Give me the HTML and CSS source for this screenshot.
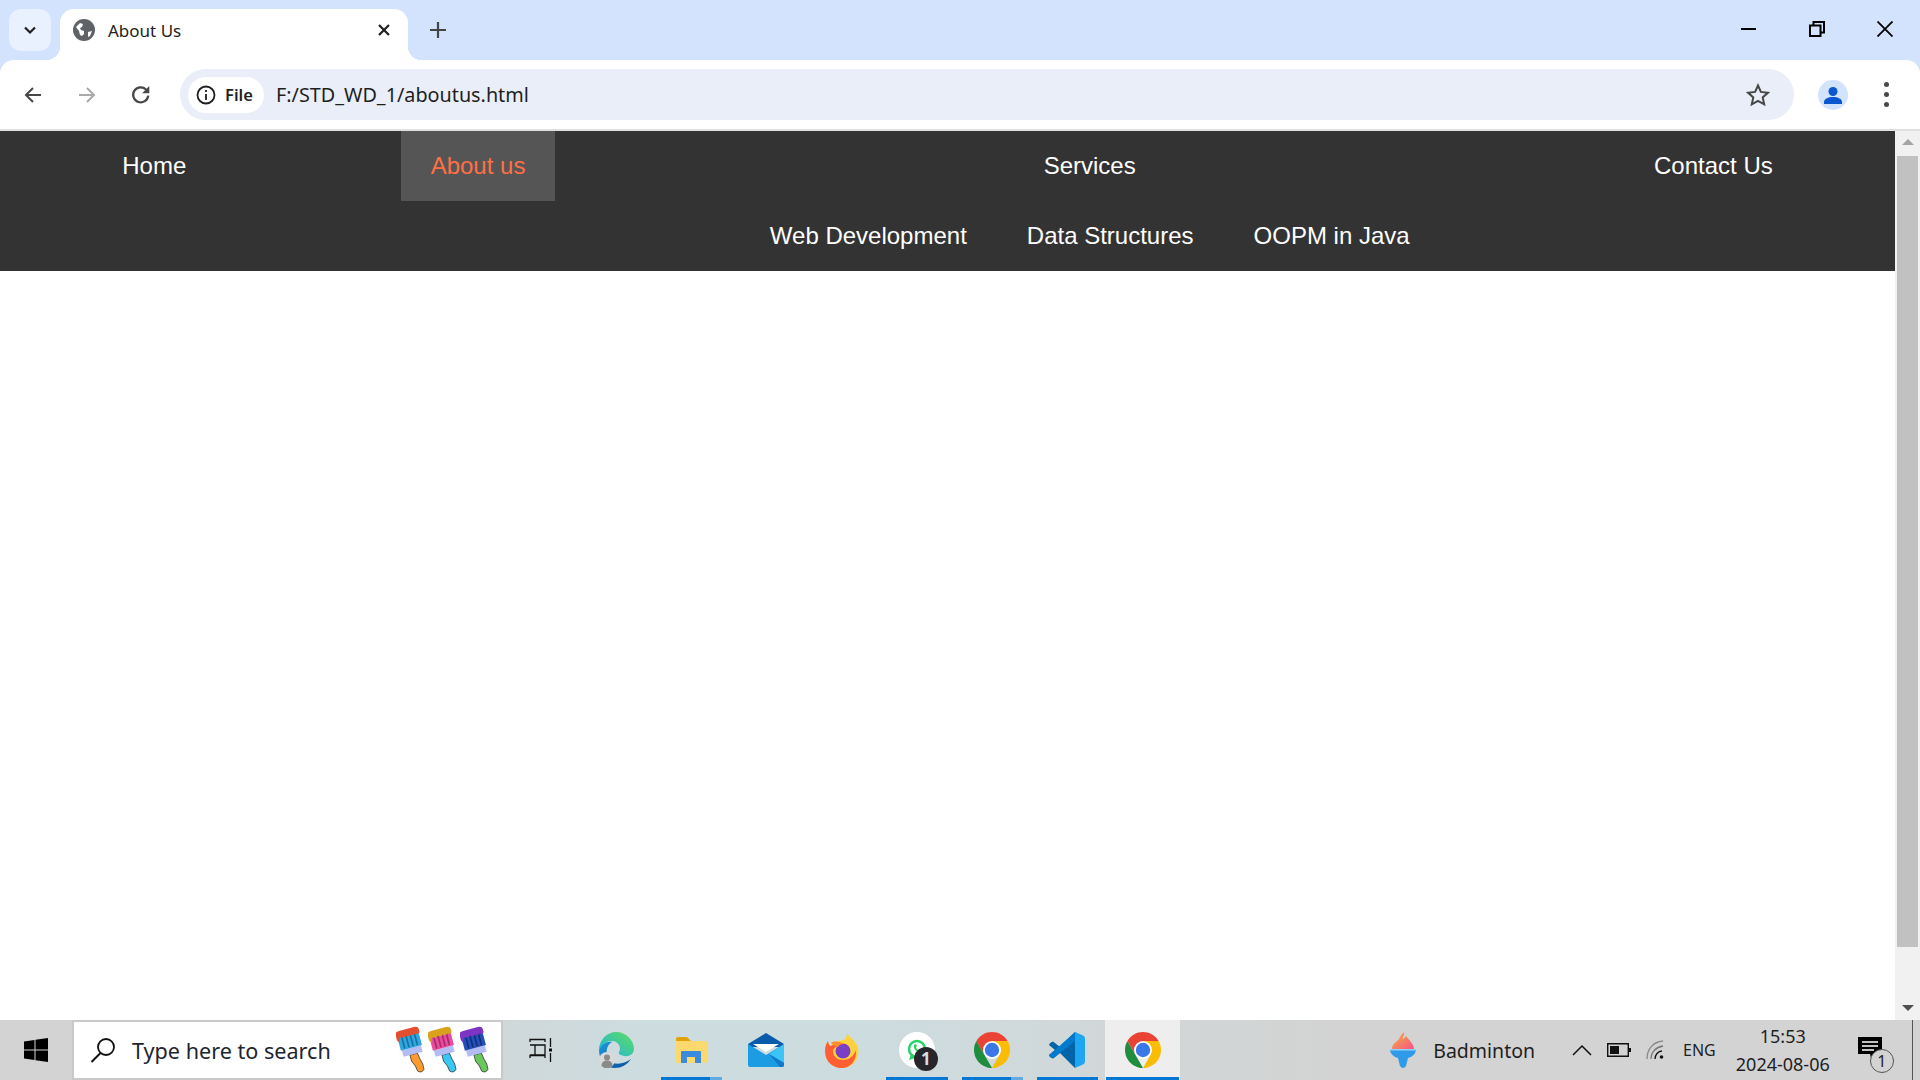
FILE: index.html
```html
<!DOCTYPE html>
<html>
<head>
    <meta charset="UTF-8">
    <title>About Us</title>
    <link rel="stylesheet" href="styles.css">
</head>
<body>
<svg class="defs" width="0" height="0">
    <symbol id="chrome" viewBox="4 4 40 40">
        <path fill="#ea4335" d="M6.68 14A20 20 0 0 1 41.32 14H24L15.34 29Z"/>
        <path fill="#fbbc04" d="M24 14H41.32A20 20 0 0 1 24 44L32.66 29Z"/>
        <path fill="#1e8e3e" d="M6.68 14L15.34 29L24 44A20 20 0 0 1 6.68 14Z"/>
        <circle cx="24" cy="24" r="10" fill="#fff"/>
        <circle cx="24" cy="24" r="8" fill="#3b78e7"/>
    </symbol>
    <symbol id="brush" viewBox="2 2 28 44">
        <g transform="rotate(-15 16 24)">
            <path class="handle" d="M13 28h7l1 6q2 5 1 10q-3 3-6 0q0-5-3-10z" stroke="#222" stroke-width=".6"/>
            <rect x="7" y="22" width="18" height="6" fill="#b4bcf5"/>
            <rect class="hair" x="6" y="6" width="20" height="16"/>
            <path class="line" d="M10 10v11M14 10v11M18 10v11M22 10v11" stroke-width="1.5" fill="none"/>
            <path class="cap" d="M5 12V7q0-3 4-3h14q4 0 4 3v3q-2 2-4 0q-2 2-4 0q-3 2-5 0q-3 2-5 0q-2 0-2 5z"/>
        </g>
    </symbol>
    <linearGradient id="edgeTop" x1="0" y1="1" x2="1" y2="0">
        <stop offset="0" stop-color="#19b5e0"/>
        <stop offset="1" stop-color="#62dc60"/>
    </linearGradient>
    <linearGradient id="edgeLow" x1="0" y1="0" x2="1" y2="1">
        <stop offset="0" stop-color="#1b9be0"/>
        <stop offset="1" stop-color="#0b4f9a"/>
    </linearGradient>
    <linearGradient id="flame" x1="0" y1="0" x2="1" y2="1">
        <stop offset="0" stop-color="#fbb13c"/>
        <stop offset="1" stop-color="#f0568a"/>
    </linearGradient>
</svg>

<div class="titlebar">
    <div class="tab-search">
        <svg width="16" height="16" viewBox="0 0 16 16"><path d="M3 5.500l5 5 5-5" fill="none" stroke="#1f1f1f" stroke-width="2.200"/></svg>
    </div>
    <div class="tab">
        <svg width="22" height="22" viewBox="0 0 22 22">
            <circle cx="11" cy="11" r="11" fill="#5f6368"/>
            <path fill="#fff" d="M3 8l4-4 3 1-1 3-2 1 1 2 3 1 0 3-2 2-2-1-1-4zM15 13l4-1-2 5-2 1z"/>
        </svg>
        <span class="tab-title">About Us</span>
        <svg class="tab-close" width="14" height="14" viewBox="0 0 14 14"><path d="M2 2l10 10M12 2L2 12" stroke="#1f1f1f" stroke-width="2.200"/></svg>
    </div>
    <svg class="new-tab" width="18" height="18" viewBox="0 0 18 18"><path d="M9 1v16M1 9h16" stroke="#444" stroke-width="2.200"/></svg>
    <div class="win-btns">
        <svg width="16" height="16" viewBox="0 0 16 16"><path d="M0 8h15" stroke="#000" stroke-width="2"/></svg>
        <svg width="16" height="16" viewBox="0 0 16 16"><path d="M1 4.500h10.500v10.500H1zM4.500 4V1H15v10.500h-3" fill="none" stroke="#000" stroke-width="2"/></svg>
        <svg width="16" height="16" viewBox="0 0 16 16"><path d="M.5.500l15 15M15.500.500l-15 15" stroke="#000" stroke-width="1.800"/></svg>
    </div>
</div>

<div class="toolbar">
    <svg class="tool" width="20" height="20" viewBox="0 0 20 20"><path d="M18 10H3M10 3l-7 7 7 7" fill="none" stroke="#474747" stroke-width="2"/></svg>
    <svg class="tool" width="20" height="20" viewBox="0 0 20 20"><path d="M2 10h15M10 3l7 7-7 7" fill="none" stroke="#a9a9a9" stroke-width="2"/></svg>
    <svg class="tool" width="20" height="20" viewBox="1 1 18 18"><path d="M16.500 10.500A6.800 6.800 0 1 1 14.500 5" fill="none" stroke="#474747" stroke-width="2"/><path d="M17.500 2v6.500H11z" fill="#474747"/></svg>
    <div class="omnibox">
        <div class="chip">
            <svg width="20" height="20" viewBox="0 0 20 20"><circle cx="10" cy="10" r="8.500" fill="none" stroke="#1f1f1f" stroke-width="1.800"/><path d="M10 9v6M10 5v2" stroke="#1f1f1f" stroke-width="1.800"/></svg>
            <span>File</span>
        </div>
        <span class="url">F:/STD_WD_1/aboutus.html</span>
        <svg class="star" width="24" height="24" viewBox="0 0 24 24"><path d="M12 2.500l2.900 6.400 7 .8-5.200 4.700 1.500 6.900-6.200-3.500-6.200 3.500 1.500-6.900L2.100 9.700l7-.8z" fill="none" stroke="#474747" stroke-width="2"/></svg>
    </div>
    <div class="avatar">
        <svg width="30" height="30" viewBox="0 0 30 30"><circle cx="15" cy="11.500" r="4.500" fill="#0b57d0"/><path d="M6 24v-2c0-3 4-5 9-5s9 2 9 5v2z" fill="#0b57d0"/></svg>
    </div>
    <div class="dots"><i></i><i></i><i></i></div>
</div>

<div class="viewport">
    <div class="page">
        <ul class="nav">
            <li><a href="#">Home</a></li>
            <li><a href="#" class="current">About us</a></li>
            <li class="dropdown">
                <a href="#">Services</a>
                <ul class="sub">
                    <li><a href="#">Web Development</a></li>
                    <li><a href="#">Data Structures</a></li>
                    <li><a href="#">OOPM in Java</a></li>
                </ul>
            </li>
            <li><a href="#">Contact Us</a></li>
        </ul>
    </div>
    <div class="scrollbar">
        <div class="arrow-up"></div>
        <div class="thumb"></div>
        <div class="arrow-down"></div>
    </div>
</div>

<div class="taskbar">
    <div class="start">
        <svg width="24" height="24" viewBox="0 0 24 24"><path d="M0 3.500l10.500-1.500v9.500H0zM11.500 1.800L24 0v11.500H11.500zM0 12.500h10.500V22L0 20.500zM11.500 12.500H24V24l-12.500-1.800z" fill="#000"/></svg>
    </div>
    <div class="search">
        <svg width="26" height="26" viewBox="0 0 26 26"><circle cx="16" cy="10" r="8" fill="none" stroke="#111" stroke-width="1.800"/><path d="M10.500 16L1.500 25" stroke="#111" stroke-width="2"/></svg>
        <span class="search-text">Type here to search</span>
        <div class="brushes">
            <svg class="b1" width="32" height="48"><use href="#brush"/></svg>
            <svg class="b2" width="32" height="48"><use href="#brush"/></svg>
            <svg class="b3" width="32" height="48"><use href="#brush"/></svg>
        </div>
    </div>
    <div class="tasks">
        <div class="slot">
            <svg width="24" height="24" viewBox="0 0 24 24" fill="none" stroke="#111" stroke-width="1.300"><path d="M1 4V1.500h15V4M1 20v-2.500h15V20M1 7h15v10H1M6 7v10M21.500 0v9M21.500 15v9"/><rect x="20" y="10.500" width="3" height="3" fill="#111" stroke="none"/></svg>
        </div>
        <div class="slot">
            <svg width="36" height="36" viewBox="0 0 36 36">
                <path fill="url(#edgeTop)" d="M1 18C1 8 9 0 18 0C28 0 36 8 36 17C36 22 31 25 26 24C22 23 20 22 21 20C24 15 20 9 14 9C8 9 3 13 1 18Z"/>
                <path fill="url(#edgeLow)" d="M1 18C3 12 9 9 14 10C8 13 7 22 11 28C15 33 25 33 33 27C29 33 23 36 17 36C8 36 1 28 1 18Z"/>
                <circle cx="9" cy="28" r="8" fill="#d9d9d9"/>
                <circle cx="9" cy="25.500" r="3" fill="#8a8a8a"/>
                <path d="M3.500 34c0-4 2.500-5.500 5.500-5.500s5.500 1.500 5.500 5.500l-3 2h-5z" fill="#8a8a8a"/>
            </svg>
        </div>
        <div class="slot running multi">
            <svg width="32" height="26" viewBox="0 0 32 26">
                <path fill="#e0a30a" d="M1 2q0-2 2-2h9l4 4H1z"/>
                <path fill="#fcd96e" d="M0 5q0-1 1-1h29q2 0 2 2v18q0 2-2 2H2q-2 0-2-2z"/>
                <path fill="#3b8bdc" d="M6 15q0-1 1-1h18q1 0 1 1v11h-6v-6h-8v6H6z"/>
            </svg>
        </div>
        <div class="slot">
            <svg width="36" height="34" viewBox="0 0 36 34">
                <path fill="#0a5cab" d="M0 11L18 0l18 11v3H0z"/>
                <path fill="#fff" d="M5 11h26L18 19z"/>
                <path fill="#1c9ce3" d="M0 11l18 11 18-11v21q0 2-2 2H2q-2 0-2-2z"/>
                <path fill="#3bc4f5" d="M36 11v19L21 21z"/>
                <path fill="#1278c9" d="M21 21l15 9v2q0 2-2 2h-2z"/>
            </svg>
        </div>
        <div class="slot">
            <svg width="34" height="36" viewBox="0 0 34 36">
                <path fill="#ffd23c" d="M22 0c1 5 9 8 11 16c2 10-5 20-16 20C7 36 0 29 0 19c0-4 1-7 3-10c0 3 2 5 3 5c2-5 10-5 14-7c2-2 2-5 2-7z"/>
                <path fill="#ff5f33" d="M0 19c0-4 1-7 3-10c0 3 2 5 3 5c3-2 5-1 7 0c-3 1-5 3-5 5c0 6 5 9 10 9c6 0 11-4 13-10c1 11-6 18-14 18C7 36 0 29 0 19z"/>
                <circle cx="18" cy="19" r="7.500" fill="#7b3fc4"/>
                <path fill="#ff8c2a" d="M6 11c3-2 8-2 13 1c-3 0-5 1-6 3c-3-1-5-2-7-4z"/>
            </svg>
        </div>
        <div class="slot running">
            <div class="whatsapp">
                <svg width="24" height="24" viewBox="0 0 24 24"><circle cx="12" cy="11" r="8" fill="none" stroke="#25d366" stroke-width="2.500"/><path d="M4 22l2-6 4 4zM9 7c-1 4 3 8 7 7l0-2-2-1-1 1c-1-1-2-2-2-3l1-1-1-2z" fill="#25d366"/></svg>
                <span class="badge">1</span>
            </div>
        </div>
        <div class="slot running multi"><svg width="36" height="36"><use href="#chrome"/></svg></div>
        <div class="slot running">
            <svg width="36" height="36" viewBox="0 0 36 36">
                <path fill="#0065a9" d="M26 0L11 15 4 9.500 1 11l-1 2 6 5-6 5 1 2 3 1.500L11 21l15 15 2-4V4z"/>
                <path fill="#007acc" d="M26 0L6 18l-6 5 1 2 3 1.500L26 9z"/>
                <path fill="#1fa6f2" d="M26 0l8 3.500q2 1 2 3v23q0 2-2 3L26 36z"/>
            </svg>
        </div>
        <div class="slot running active"><svg width="36" height="36"><use href="#chrome"/></svg></div>
    </div>
    <div class="tray">
        <svg class="torch" width="26" height="36" viewBox="0 0 26 36">
            <path fill="url(#flame)" d="M14 0c1 4-2 5-1 7c1-1 2-1 3-3c3 4 8 8 8 13H2c0-6 5-7 7-10c1-3 3-5 5-7z"/>
            <path fill="#2f9be8" d="M0 17h26c0 5-4 8-8 9l-2 8q-3 4-6 0l-2-8c-4-1-8-4-8-9z"/>
            <path fill="#8fd3f7" d="M0 17h26v1.500H0z"/>
        </svg>
        <span class="sport">Badminton</span>
        <svg class="caret" width="20" height="12" viewBox="0 0 20 12"><path d="M1 11l9-9 9 9" fill="none" stroke="#111" stroke-width="1.500"/></svg>
        <svg class="battery" width="24" height="14" viewBox="0 0 24 14"><path d="M.7.700h20.600v12.600H.7z" fill="none" stroke="#111" stroke-width="1.400"/><rect x="3" y="3" width="9" height="8" fill="#111"/><rect x="22" y="5" width="2" height="4" fill="#111"/></svg>
        <svg class="wifi" width="18" height="20" viewBox="0 0 18 20" fill="none" stroke-width="1.300"><path d="M1 19C1 9 7 2 17 1" stroke="#888"/><path d="M5 19c0-7 5-12 12-13" stroke="#777"/><path d="M9 19c0-4 3-8 7-8" stroke="#111"/><circle cx="15.500" cy="17" r="1.800" fill="#111" stroke="none"/></svg>
        <span class="lang">ENG</span>
        <div class="clock"><span>15:53</span><span>2024-08-06</span></div>
        <div class="notify">
            <svg width="24" height="26" viewBox="0 0 24 26"><path d="M0 0h24v17h-8l-3 4-1-4H0z" fill="#000"/><path d="M4 5h16M4 9h16M4 13h12" stroke="#fff" stroke-width="1.300"/></svg>
            <span class="notify-count">1</span>
        </div>
    </div>
</div>
</body>
</html>
```

FILE: styles.css
```css
* {
    margin: 0;
    padding: 0;
    box-sizing: border-box;
}

html, body {
    width: 1920px;
    height: 1080px;
    overflow: hidden;
}

body {
    background-color: #d3e3fd;
    font-family: "Noto Sans", "Open Sans", sans-serif;
    color: #1f1f1f;
}

.defs {
    display: block;
    height: 0;
}

svg {
    display: block;
    flex-shrink: 0;
}

/*browser title bar*/
.titlebar {
    height: 60px;
    display: flex;
    align-items: flex-end;
    padding-left: 9px;
}

.tab-search {
    width: 42px;
    height: 42px;
    margin-bottom: 9px;
    border-radius: 12px;
    background-color: #e9f0fe;
    display: flex;
    align-items: center;
    justify-content: center;
}

.tab {
    position: relative;
    width: 348px;
    height: 51px;
    margin-left: 9px;
    padding: 0 17px 9px 13px;
    background-color: #fff;
    border-radius: 14px 14px 0 0;
    display: flex;
    align-items: center;
    gap: 13px;
}

/*concave corners at the foot of the tab*/
.tab::before,
.tab::after {
    content: "";
    position: absolute;
    bottom: 0;
    width: 14px;
    height: 14px;
}

.tab::before {
    left: -14px;
    background: radial-gradient(circle at 0 0, transparent 14px, #fff 14.5px);
}

.tab::after {
    right: -14px;
    background: radial-gradient(circle at 100% 0, transparent 14px, #fff 14.5px);
}

.tab-title {
    font-size: 17px;
    flex: 1;
    color: #222;
}

.new-tab {
    margin: 0 0 21px 21px;
}

.win-btns {
    margin-left: auto;
    height: 60px;
    width: 179px;
    padding: 21px 27px 0 0;
    display: flex;
    justify-content: space-between;
    align-items: flex-start;
}

/*toolbar*/
.toolbar {
    height: 71px;
    background-color: #fff;
    border-bottom: 2px solid #e0e0e0;
    border-radius: 14px 14px 0 0;
    display: flex;
    align-items: center;
    padding-left: 23px;
}

.tool {
    margin-right: 34px;
}

.omnibox {
    width: 1614px;
    height: 51px;
    margin-left: -5px;
    padding: 0 24px 0 8px;
    border-radius: 26px;
    background-color: #e9eef8;
    display: flex;
    align-items: center;
}

.chip {
    width: 76px;
    height: 36px;
    padding-left: 8px;
    border-radius: 18px;
    background-color: #fff;
    display: flex;
    align-items: center;
    gap: 9px;
    font-size: 16.500px;
    font-weight: 600;
}

.url {
    font-size: 19.800px;
    margin-left: 12px;
}

.star {
    margin-left: auto;
}

.avatar {
    width: 30px;
    height: 30px;
    margin-left: 24px;
    border-radius: 50%;
    background-color: #d3e3fd;
}

.dots {
    margin-left: 36px;
    display: flex;
    flex-direction: column;
    gap: 5px;
}

.dots i {
    display: block;
    width: 5px;
    height: 5px;
    border-radius: 50%;
    background-color: #474747;
}

/*page area*/
.viewport {
    height: 889px;
    background-color: #fff;
    display: flex;
}

.page {
    flex: 1;
}

.nav {
    list-style: none;
    background-color: #333;
    display: flex;
    justify-content: space-around;
    font-family: "Liberation Sans", Arial, sans-serif;
    font-size: 24px;
}

.nav a {
    display: block;
    height: 70px;
    line-height: 70px;
    padding: 0 30px;
    color: #fff;
    text-decoration: none;
}

.nav a.current {
    background-color: #555;
    color: #ff7043;
}

.dropdown {
    display: flex;
    flex-direction: column;
    align-items: center;
}

.sub {
    list-style: none;
    display: flex;
}

.scrollbar {
    width: 25px;
    background-color: #f1f1f1;
    padding: 0 2px;
    display: flex;
    flex-direction: column;
    align-items: center;
}

.arrow-up,
.arrow-down {
    width: 0;
    height: 0;
    border-left: 6px solid transparent;
    border-right: 6px solid transparent;
}

.arrow-up {
    margin: 8px 0 11px;
    border-bottom: 6px solid #a3a3a3;
}

.arrow-down {
    margin-top: 58px;
    border-top: 6px solid #505050;
}

.thumb {
    width: 100%;
    height: 791px;
    background-color: #c1c1c1;
}

/*windows taskbar*/
.taskbar {
    height: 60px;
    display: flex;
    background: linear-gradient(90deg, #d3d3d3 0, #d2d4d4 20%, #cddcdf 33%, #cddcdf 45%, #d1d7d8 58%, #d3d3d3 70%, #d3d3d3 100%);
}

.start {
    width: 72px;
    display: flex;
    align-items: center;
    padding-left: 24px;
}

.search {
    width: 431px;
    border: 2px solid #c9c9c9;
    background-color: #fff;
    display: flex;
    align-items: center;
    padding-left: 16px;
}

.search-text {
    font-size: 21.600px;
    margin-left: 16px;
    color: #1d2530;
}

.brushes {
    margin-left: auto;
    margin-right: 9px;
    display: flex;
}

.b1 { --hair: #2ea6df; --line: #1a6f9f; --cap: #e2502f; --handle: #ff9a2e; }
.b2 { --hair: #e84c9c; --line: #a82a6e; --cap: #d8a21c; --handle: #38c6f4; }
.b3 { --hair: #2350b8; --line: #142f7c; --cap: #7d33c4; --handle: #6cc65e; }

.hair { fill: var(--hair); }
.line { stroke: var(--line); }
.cap { fill: var(--cap); }
.handle { fill: var(--handle); }

.tasks {
    display: flex;
    height: 100%;
}

.slot {
    position: relative;
    width: 75.250px;
    display: flex;
    align-items: center;
    justify-content: center;
}

.running::after {
    content: "";
    position: absolute;
    left: 7px;
    right: 7px;
    bottom: 0;
    height: 3px;
    background-color: #0078d4;
}

.multi::before {
    content: "";
    position: absolute;
    right: 7px;
    bottom: 0;
    width: 12px;
    height: 3px;
    background-color: #63a9e2;
    z-index: 1;
}

.active {
    background-color: #eee;
}

.active::after {
    left: 1px;
    right: 1px;
}

.whatsapp {
    position: relative;
    width: 36px;
    height: 36px;
    border-radius: 50%;
    background-color: #fff;
    display: flex;
    align-items: center;
    justify-content: center;
}

.badge {
    position: absolute;
    right: -3px;
    bottom: -3px;
    width: 24px;
    height: 24px;
    border-radius: 50%;
    background-color: #26262c;
    color: #ddd;
    font-size: 17px;
    font-weight: 700;
    line-height: 24px;
    text-align: center;
}

.tray {
    flex: 1;
    display: flex;
    align-items: center;
    padding-left: 210px;
    border-right: 1px solid #555;
    margin-right: 7px;
}

.sport {
    font-size: 19.500px;
    margin-left: 17px;
}

.caret {
    margin-left: 37px;
}

.battery {
    margin-left: 15px;
}

.wifi {
    margin-left: 15px;
}

.lang {
    font-size: 16px;
    margin-left: 19px;
}

.clock {
    width: 100px;
    margin-left: 17px;
    font-size: 18px;
    line-height: 28px;
    display: flex;
    flex-direction: column;
    align-items: center;
}

.notify {
    position: relative;
    margin-left: 25px;
}

.notify-count {
    position: absolute;
    left: 12px;
    top: 12px;
    width: 24px;
    height: 24px;
    border: 1px solid #555;
    border-radius: 50%;
    font-size: 16px;
    line-height: 22px;
    text-align: center;
    background-color: #d3d3d3;
}
```
